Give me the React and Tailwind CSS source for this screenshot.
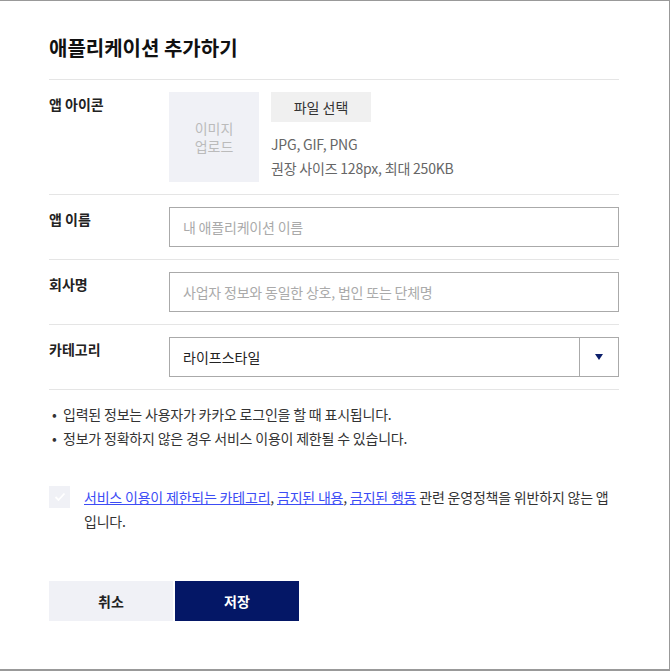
const labelCls = "w-[120px] shrink-0 text-[14px] font-bold text-[#222] leading-[24px]";

const App = () => {
  return (
    <div
      className="w-[670px] h-[671px] bg-white border-t border-r border-b-2 border-[#999] overflow-hidden"
      style={{ fontFamily: '"Noto Sans CJK KR", "Noto Sans", sans-serif' }}
    >
      <div className="pl-[49px] pr-[50px] pt-[32px] w-[669px]">
        <h1 className="text-[20px] font-bold text-[#111] leading-[30px] pb-[16px] border-b border-[#e5e5e5]">
          애플리케이션 추가하기
        </h1>

        {/* 앱 아이콘 */}
        <div className="flex border-b border-[#e5e5e5] pt-[12px] pb-[12px]">
          <div className={labelCls}>앱 아이콘</div>
          <div className="flex gap-[12px]">
            <div className="w-[90px] h-[90px] bg-[#f0f1f6] flex items-center justify-center text-center text-[14px] leading-[18px] text-[#bbb]">
              이미지
              <br />
              업로드
            </div>
            <div className="flex flex-col">
              <button className="w-[100px] h-[30px] bg-[#f0f0f0] text-[14px] text-[#333]">
                파일 선택
              </button>
              <div className="mt-[10px] text-[14px] leading-[24px] text-[#666] tracking-[-0.2px]">
                <div>JPG, GIF, PNG</div>
                <div>권장 사이즈 128px, 최대 250KB</div>
              </div>
            </div>
          </div>
        </div>

        <div className="flex border-b border-[#e5e5e5] py-[12px]">
          <div className={labelCls}>앱 이름</div>
          <input
            className="flex-1 h-[40px] border border-[#aaa] px-[13px] text-[14px] tracking-[-0.2px] placeholder:text-[#aaa] outline-none"
            placeholder="내 애플리케이션 이름"
          />
        </div>

        <div className="flex border-b border-[#e5e5e5] py-[12px]">
          <div className={labelCls}>회사명</div>
          <input
            className="flex-1 h-[40px] border border-[#aaa] px-[13px] text-[14px] tracking-[-0.2px] placeholder:text-[#aaa] outline-none"
            placeholder="사업자 정보와 동일한 상호, 법인 또는 단체명"
          />
        </div>

        <div className="flex border-b border-[#e5e5e5] py-[12px]">
          <div className={labelCls}>카테고리</div>
          <div className="flex-1 h-[40px] border border-[#aaa] flex">
            <div className="flex-1 px-[13px] flex items-center text-[14px] text-[#222]">
              라이프스타일
            </div>
            <div className="w-[39px] border-l border-[#aaa] flex items-center justify-center">
              <svg width="8" height="6" viewBox="0 0 8 6">
                <path d="M0 0 L8 0 L4 6 Z" fill="#0b1f6b" />
              </svg>
            </div>
          </div>
        </div>

        <ul className="mt-[12px] text-[14px] leading-[24px] text-[#333] tracking-[-0.2px]">
          <li className="flex">
            <span className="w-[14px] pl-[3px]">•</span>
            <span>입력된 정보는 사용자가 카카오 로그인을 할 때 표시됩니다.</span>
          </li>
          <li className="flex">
            <span className="w-[14px] pl-[3px]">•</span>
            <span>정보가 정확하지 않은 경우 서비스 이용이 제한될 수 있습니다.</span>
          </li>
        </ul>

        <div className="mt-[35px] flex">
          <div className="w-[21px] h-[22px] shrink-0 bg-[#f0f1f6] flex items-center justify-center mt-[1px]">
            <svg width="12" height="10" viewBox="0 0 12 10" fill="none">
              <path d="M1.5 5 L4.5 8 L10.5 1.5" stroke="#fff" strokeWidth="1.8" />
            </svg>
          </div>
          <p className="ml-[14px] text-[14px] leading-[24px] text-[#333] tracking-[-0.2px]">
            <a className="text-[#3c4cf5] underline">서비스 이용이 제한되는 카테고리</a>,{" "}
            <a className="text-[#3c4cf5] underline">금지된 내용</a>,{" "}
            <a className="text-[#3c4cf5] underline">금지된 행동</a> 관련 운영정책을 위반하지 않는 앱
            입니다.
          </p>
        </div>

        <div className="mt-[48px] flex gap-[2px]">
          <button className="w-[124px] h-[40px] bg-[#f0f1f6] text-[14px] font-bold text-[#222]">
            취소
          </button>
          <button className="w-[124px] h-[40px] bg-[#041766] text-[14px] font-bold text-white">
            저장
          </button>
        </div>
      </div>
    </div>
  );
};

export default App;
